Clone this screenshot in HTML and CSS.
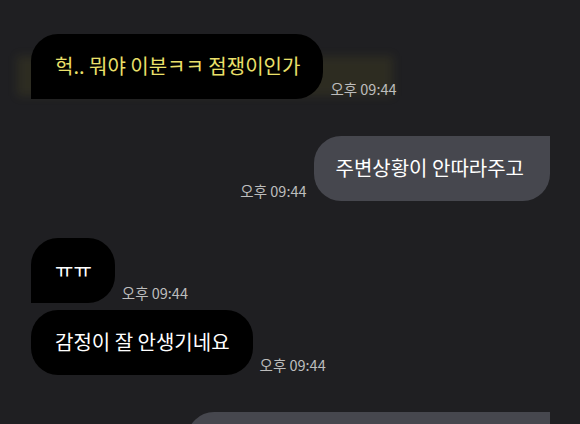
FILE: index.html
```html
<!DOCTYPE html>
<html>
<head>
  <meta charset="UTF-8">
  <title>Chat</title>
  <link rel="stylesheet" href="styles.css">
</head>
<body>
  <div class="chat">
    <div class="row in highlight">
      <div class="bubble first yellow">헉.. 뭐야 이분ㅋㅋ 점쟁이인가</div>
      <span class="time">오후 09:44</span>
    </div>
    <div class="row out">
      <span class="time">오후 09:44</span>
      <div class="bubble first">주변상황이 안따라주고</div>
    </div>
    <div class="row in">
      <div class="bubble first">ㅠㅠ</div>
      <span class="time">오후 09:44</span>
    </div>
    <div class="row in cont">
      <div class="bubble">감정이 잘 안생기네요</div>
      <span class="time">오후 09:44</span>
    </div>
    <div class="row out">
      <div class="bubble first wide"></div>
    </div>
  </div>
</body>
</html>
```

FILE: styles.css
```css
:root {
  --bg: #1f1f22;
  --bubble-in: #000;
  --bubble-out: #46474e;
  --time: #bdbdbd;
  --yellow: #ebe06a;
}
body {
  margin: 0;
  background-color: var(--bg);
  font-family: 'Noto Sans CJK KR', 'Noto Sans', sans-serif;
  color: #fff;
}
.chat {
  display: flex;
  flex-direction: column;
  padding: 34px 30px 0 31px;
  height: 424px;
  box-sizing: border-box;
  overflow: hidden;
}
.row {
  position: relative;
  display: flex;
  align-items: flex-end;
  flex-shrink: 0;
  gap: 7px;
  margin-top: 37px;
}
.row:first-child { margin-top: 0; }
.row.cont { margin-top: 7px; }
.row.out { justify-content: flex-end; }
.bubble {
  position: relative;
  z-index: 1;
  height: 65px;
  box-sizing: border-box;
  padding: 0 23px 2px 24px;
  display: flex;
  align-items: center;
  font-size: 20px;
  white-space: nowrap;
  border-radius: 27px;
}
.row.in .bubble { background: var(--bubble-in); }
.row.in .bubble.first { border-bottom-left-radius: 0; }
.row.out .bubble {
  background: var(--bubble-out);
  padding: 0 26px 2px 22px;
}
.row.out .bubble.first { border-top-right-radius: 0; }
.bubble.yellow { color: var(--yellow); }
.bubble.wide { width: 363px; }
.time {
  position: relative;
  z-index: 1;
  font-size: 14.5px;
  line-height: 1;
  color: var(--time);
  margin-bottom: 3px;
  white-space: nowrap;
}
/* faint yellow smear behind the first message */
.highlight::before {
  content: "";
  position: absolute;
  left: -14px;
  top: 22px;
  width: 376px;
  height: 40px;
  background: rgba(150, 140, 30, 0.12);
  filter: blur(5px);
}
```
